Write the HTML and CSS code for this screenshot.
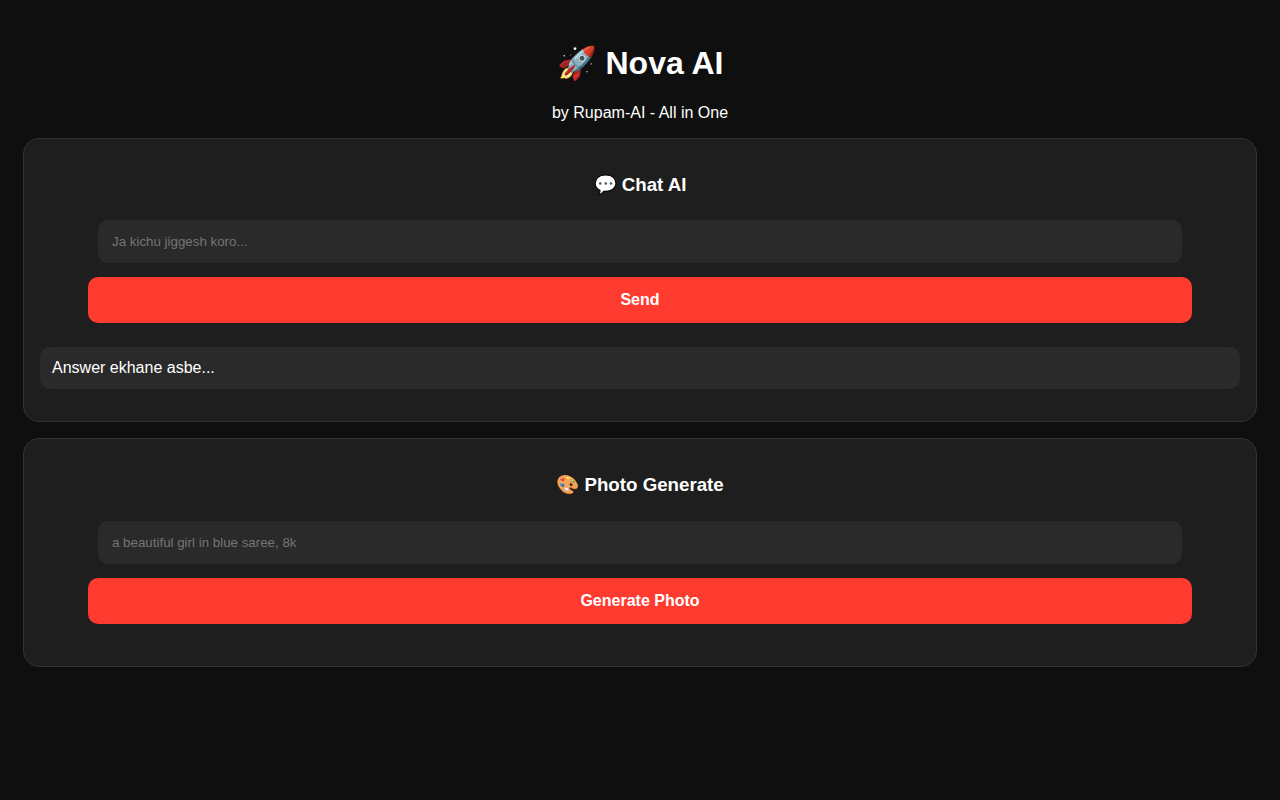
FILE: index.html
```html
<!DOCTYPE html>
<html lang="en">
<head>
  <meta charset="UTF-8" />
  <meta name="viewport" content="width=device-width, initial-scale=1.0"/>
  <title>Nova AI</title>
  <link rel="stylesheet" href="styles.css">
</head>
<body>
  <h1>🚀 Nova AI</h1>
  <p>by Rupam-AI - All in One</p>

  <!-- Chat -->
  <div class="box">
    <h3>💬 Chat AI</h3>
    <input type="text" id="question" aria-label="Question" placeholder="Ja kichu jiggesh koro...">
    <button type="button" class="btn">Send</button>
    <div class="answer" id="answer">Answer ekhane asbe...</div>
  </div>

  <!-- Photo -->
  <div class="box">
    <h3>🎨 Photo Generate</h3>
    <input type="text" id="prompt" aria-label="Photo prompt" placeholder="a beautiful girl in blue saree, 8k">
    <button type="button" class="btn">Generate Photo</button>
    <div class="photo" id="photo"></div>
  </div>
</body>
</html>
```

FILE: styles.css
```css
body {
  font-family: "Liberation Sans", Arial, sans-serif;
  margin: 8px;
  padding: 15px;
  background: #0f0f0f;
  color: white;
  text-align: center;
}

.box {
  background: #1e1e1e;
  margin: 16px 0;
  padding: 16px;
  border: 1px solid #333;
  border-radius: 16px;
}

input {
  width: 88%;
  padding: 14px;
  margin: 6px 0;
  border: none;
  border-radius: 10px;
  background: #2a2a2a;
  color: white;
}

.btn {
  width: 92%;
  padding: 14px;
  margin: 8px 0;
  border: none;
  border-radius: 10px;
  background: #ff3b30;
  color: white;
  font-size: 16px;
  font-weight: bold;
  cursor: pointer;
}

.answer {
  margin: 16px 0;
  padding: 12px;
  border-radius: 10px;
  background: #2a2a2a;
  text-align: left;
}

.photo {
  margin-top: 18px;
}
```
